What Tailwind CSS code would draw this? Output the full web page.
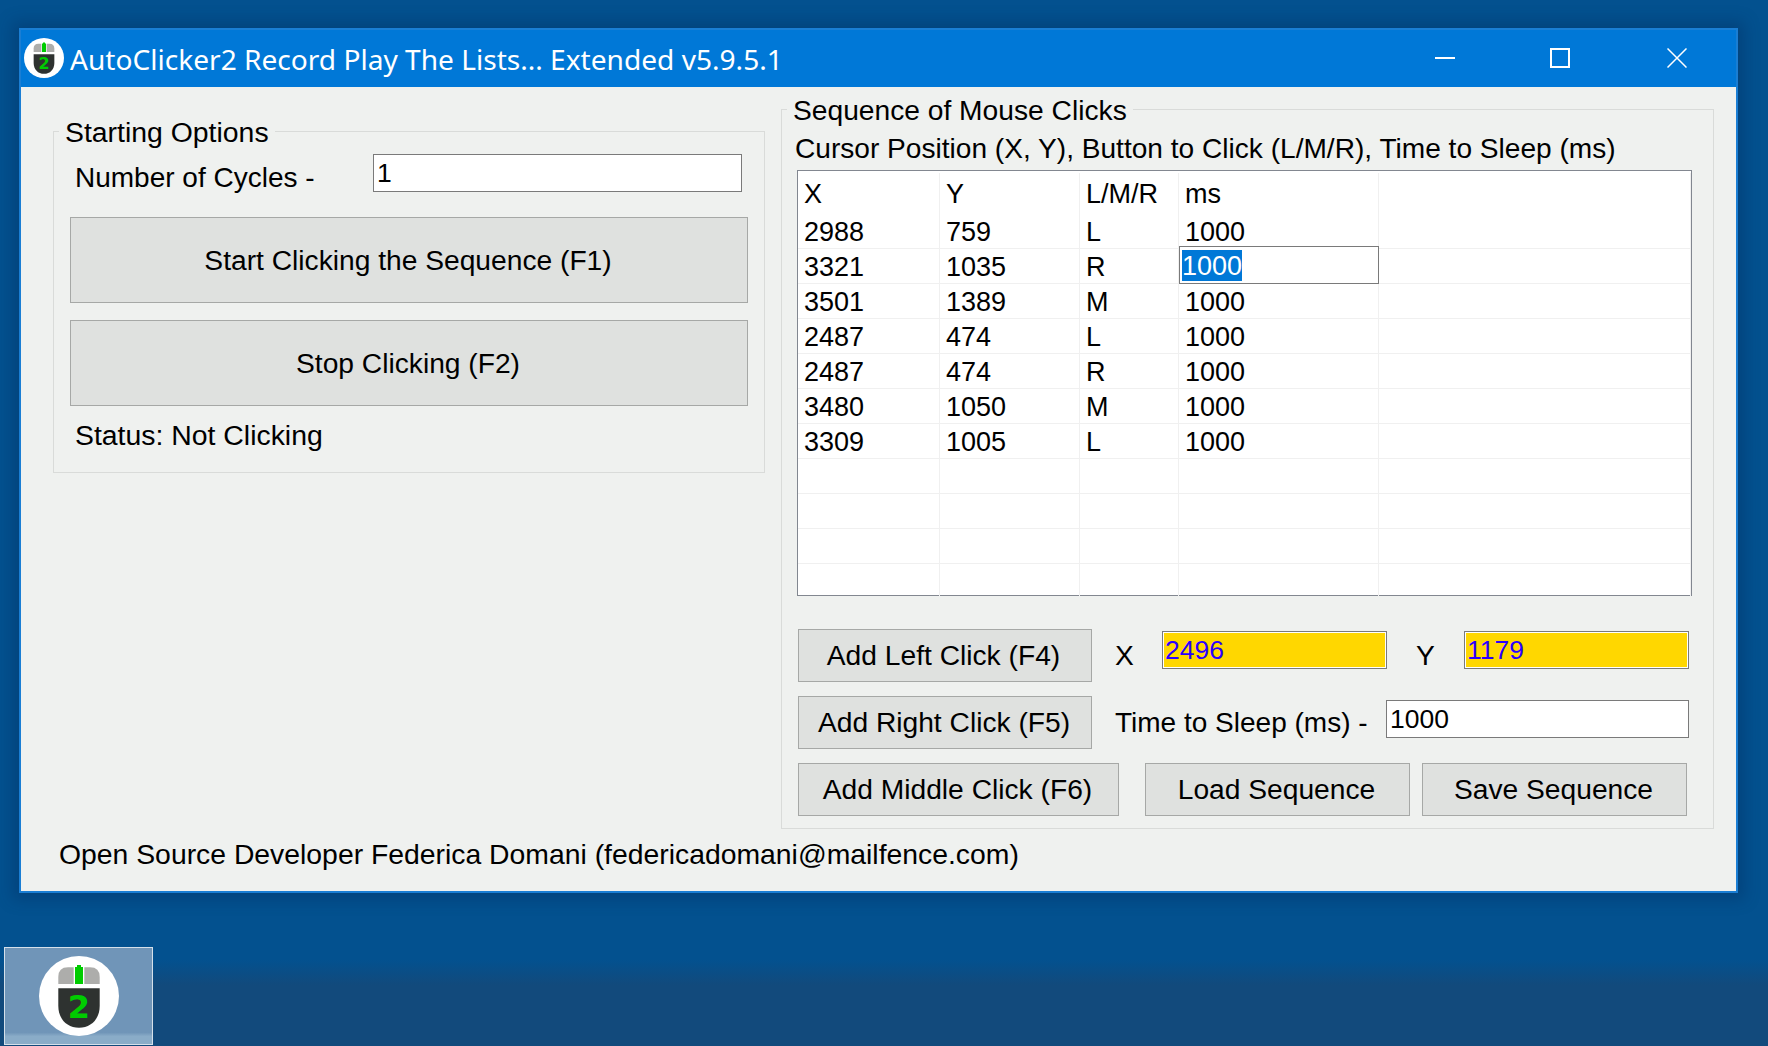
<!DOCTYPE html>
<html lang="en">

<head>
    <meta charset="UTF-8">
    <title>AutoClicker2</title>
    <script src="https://cdn.jsdelivr.net/npm/@tailwindcss/browser@4"></script>
</head>

<body class="relative w-[1768px] h-[1046px] overflow-hidden bg-[linear-gradient(#03518f_0,#03518f_960px,#124a7c_985px)] font-['Liberation_Sans',Arial,sans-serif] text-[28.2px] leading-none text-black">

    <!-- Main window -->
    <div class="absolute left-[19px] top-[28px] w-[1719px] h-[865px] border-2 border-[#1a7ed4] bg-[#eff1ef] shadow-[0_0_14px_6px_rgba(0,40,90,.35)] flex flex-col">

        <!-- Title bar -->
        <div class="h-[57px] shrink-0 bg-[#0078d7] text-white flex items-center pl-[3px]">
            <svg class="w-[40px] h-[40px] shrink-0 mb-[2px]" viewBox="0 0 80 80">
                <circle cx="40" cy="40" r="40" fill="#fff" />
                <path d="M19.3 28V21Q19.3 11.3 29 11.3H34.7V28Z" fill="#adadab" />
                <path d="M60.7 28V21Q60.7 11.3 51 11.3H45.3V28Z" fill="#adadab" />
                <path d="M36 28V11H38V9H42V11H44V28Z" fill="#00cc00" />
                <path d="M19.3 32.3H60.7V50C60.7 63 52 71.7 40 71.7C28 71.7 19.3 63 19.3 50Z" fill="#2e3230" />
                <text x="40" y="61.5" text-anchor="middle" font-family="DejaVu Sans" font-weight="700" font-size="32" fill="#00cc00">2</text>
            </svg>
            <span class="ml-[6px] pt-[2px] font-['Noto_Sans',sans-serif] text-[28.1px]">AutoClicker2 Record Play The Lists... Extended v5.9.5.1</span>
            <div class="ml-auto flex items-center pr-[49px] mb-[2px]">
                <svg class="w-[20px] h-[20px]" viewBox="0 0 20 20"><path d="M0 10H20" stroke="#fff" stroke-width="2" /></svg>
                <svg class="w-[20px] h-[20px] ml-[95px]" viewBox="0 0 20 20"><path d="M1 1H19V19H1Z" fill="none" stroke="#fff" stroke-width="2" /></svg>
                <svg class="w-[20px] h-[20px] ml-[97px]" viewBox="0 0 20 20"><path d="M0.5 0.5L19.5 19.5M19.5 0.5L0.5 19.5" stroke="#fff" stroke-width="1.5" /></svg>
            </div>
        </div>

        <!-- Body -->
        <div class="relative flex-1 flex items-start">

            <!-- Starting Options -->
            <div class="relative ml-[32px] mt-[44px] w-[712px] h-[342px] shrink-0 border border-[#d9dbd9] px-[16px]">
                <div class="absolute left-[5px] top-[-15px] bg-[#eff1ef] px-[6px] h-[30px] flex items-center text-[28.4px]">Starting Options</div>
                <div class="flex items-center h-[38px] mt-[22px]">
                    <span class="ml-[5px] w-[298px] pt-[9px] text-[28px]">Number of Cycles -</span>
                    <div class="w-[369px] h-[38px] border border-[#7a7a7a] bg-white text-[26.5px] pl-[3px] flex items-center">1</div>
                </div>
                <button class="block w-[678px] h-[86px] mt-[25px] pr-[2px] border border-[#a6a8a6] bg-[#dfe1df]">Start Clicking the Sequence (F1)</button>
                <button class="block w-[678px] h-[86px] mt-[17px] pr-[2px] border border-[#a6a8a6] bg-[#dfe1df]">Stop Clicking (F2)</button>
                <div class="ml-[5px] mt-[15px] text-[28.4px]">Status: Not Clicking</div>
            </div>

            <!-- Sequence of Mouse Clicks -->
            <div class="relative ml-[16px] mt-[22px] w-[933px] h-[720px] shrink-0 border border-[#d9dbd9] pl-[13px]">
                <div class="absolute left-[5px] top-[-15px] bg-[#eff1ef] px-[6px] h-[30px] flex items-center whitespace-nowrap">Sequence of Mouse Clicks</div>
                <div class="mt-[25px] h-[28px] flex items-center whitespace-nowrap text-[28.1px]">Cursor Position (X, Y), Button to Click (L/M/R), Time to Sleep (ms)</div>

                <!-- List of clicks -->
                <div class="relative mt-[7px] ml-[2px] w-[895px] h-[426px] border border-[#828790] bg-white text-[27px]">
                    <div class="grid grid-cols-[142px_140px_99px_200px_1fr] h-[43px] pt-[2px] *:pl-[6px] *:pt-[2px] *:flex *:items-center *:border-r *:border-[#f0f0f0]">
                        <div class="pl-[7px]">X</div><div>Y</div><div>L/M/R</div><div>ms</div><div class="border-r-0"></div>
                    </div>
                    <div class="grid grid-cols-[142px_140px_99px_200px_1fr] h-[35px] border-b border-[#f0f0f0] *:pl-[6px] *:pt-[2px] *:flex *:items-center *:border-r *:border-[#f0f0f0]">
                        <div>2988</div><div>759</div><div>L</div><div>1000</div><div></div>
                    </div>
                    <div class="grid grid-cols-[142px_140px_99px_200px_1fr] h-[35px] border-b border-[#f0f0f0] *:pl-[6px] *:pt-[2px] *:flex *:items-center *:border-r *:border-[#f0f0f0]">
                        <div>3321</div><div>1035</div><div>R</div>
                        <div class="relative"><div class="absolute left-0 top-[-3px] w-[200px] h-[38px] border border-[#7a7a7a] bg-white flex items-center pl-[2px]"><div class="bg-[#0078d7] text-white h-[31px] w-[60px] pt-[2px] flex items-center">1000</div></div></div><div></div>
                    </div>
                    <div class="grid grid-cols-[142px_140px_99px_200px_1fr] h-[35px] border-b border-[#f0f0f0] *:pl-[6px] *:pt-[2px] *:flex *:items-center *:border-r *:border-[#f0f0f0]">
                        <div>3501</div><div>1389</div><div>M</div><div>1000</div><div></div>
                    </div>
                    <div class="grid grid-cols-[142px_140px_99px_200px_1fr] h-[35px] border-b border-[#f0f0f0] *:pl-[6px] *:pt-[2px] *:flex *:items-center *:border-r *:border-[#f0f0f0]">
                        <div>2487</div><div>474</div><div>L</div><div>1000</div><div></div>
                    </div>
                    <div class="grid grid-cols-[142px_140px_99px_200px_1fr] h-[35px] border-b border-[#f0f0f0] *:pl-[6px] *:pt-[2px] *:flex *:items-center *:border-r *:border-[#f0f0f0]">
                        <div>2487</div><div>474</div><div>R</div><div>1000</div><div></div>
                    </div>
                    <div class="grid grid-cols-[142px_140px_99px_200px_1fr] h-[35px] border-b border-[#f0f0f0] *:pl-[6px] *:pt-[2px] *:flex *:items-center *:border-r *:border-[#f0f0f0]">
                        <div>3480</div><div>1050</div><div>M</div><div>1000</div><div></div>
                    </div>
                    <div class="grid grid-cols-[142px_140px_99px_200px_1fr] h-[35px] border-b border-[#f0f0f0] *:pl-[6px] *:pt-[2px] *:flex *:items-center *:border-r *:border-[#f0f0f0]">
                        <div>3309</div><div>1005</div><div>L</div><div>1000</div><div></div>
                    </div>
                    <div class="grid grid-cols-[142px_140px_99px_200px_1fr] h-[35px] border-b border-[#f0f0f0] *:border-r *:border-[#f0f0f0]"><div></div><div></div><div></div><div></div><div></div></div>
                    <div class="grid grid-cols-[142px_140px_99px_200px_1fr] h-[35px] border-b border-[#f0f0f0] *:border-r *:border-[#f0f0f0]"><div></div><div></div><div></div><div></div><div></div></div>
                    <div class="grid grid-cols-[142px_140px_99px_200px_1fr] h-[35px] border-b border-[#f0f0f0] *:border-r *:border-[#f0f0f0]"><div></div><div></div><div></div><div></div><div></div></div>
                    <div class="grid grid-cols-[142px_140px_99px_200px_1fr] h-[32px] *:border-r *:border-[#f0f0f0]"><div></div><div></div><div></div><div></div><div></div></div>
                </div>

                <!-- Controls -->
                <div class="flex items-center mt-[32px] ml-[3px] h-[54px]">
                    <button class="w-[294px] h-[53px] pt-[1px] pr-[3px] border border-[#a6a8a6] bg-[#dfe1df]">Add Left Click (F4)</button>
                    <span class="ml-[23px] w-[47px] pt-[1px]">X</span>
                    <div class="w-[225px] h-[38px] mb-[10px] border border-[#7a7a7a] outline outline-1 -outline-offset-2 outline-white bg-[#ffd700] text-[26.5px] text-[#2a00ff] pl-[2px] flex items-center">2496</div>
                    <span class="ml-[29px] w-[48px] pt-[1px]">Y</span>
                    <div class="w-[225px] h-[38px] mb-[10px] border border-[#7a7a7a] outline outline-1 -outline-offset-2 outline-white bg-[#ffd700] text-[26.5px] text-[#2a00ff] pl-[2px] flex items-center">1179</div>
                </div>
                <div class="flex items-center mt-[13px] ml-[3px] h-[54px]">
                    <button class="w-[294px] h-[53px] pt-[1px] pr-[2px] border border-[#a6a8a6] bg-[#dfe1df]">Add Right Click (F5)</button>
                    <span class="ml-[23px] w-[271px] pt-[2px] whitespace-nowrap text-[28px]">Time to Sleep (ms) -</span>
                    <div class="w-[303px] h-[38px] mb-[6px] border border-[#7a7a7a] bg-white text-[26.5px] pl-[3px] flex items-center">1000</div>
                </div>
                <div class="flex items-center mt-[14px] ml-[3px] h-[53px]">
                    <button class="w-[321px] h-[53px] pr-[2px] border border-[#a6a8a6] bg-[#dfe1df]">Add Middle Click (F6)</button>
                    <button class="ml-[26px] w-[265px] h-[53px] pr-[2px] border border-[#a6a8a6] bg-[#dfe1df]">Load Sequence</button>
                    <button class="ml-[12px] w-[265px] h-[53px] pr-[2px] border border-[#a6a8a6] bg-[#dfe1df]">Save Sequence</button>
                </div>
            </div>

            <div class="absolute left-[38px] top-[753px] text-[28.35px]">Open Source Developer Federica Domani (federicadomani@mailfence.com)</div>
        </div>
    </div>

    <!-- Minimised tray thumbnail -->
    <div class="absolute left-[4px] top-[947px] w-[149px] h-[98px] border border-[#d5e0ea] bg-[linear-gradient(#7095b8_0,#7095b8_88%,#8aacc8_92%)] flex items-center justify-center">
        <svg class="w-[80px] h-[80px]" viewBox="0 0 80 80">
            <circle cx="40" cy="40" r="40" fill="#fff" />
            <path d="M19.3 28V21Q19.3 11.3 29 11.3H34.7V28Z" fill="#adadab" />
            <path d="M60.7 28V21Q60.7 11.3 51 11.3H45.3V28Z" fill="#adadab" />
            <path d="M36 28V11H38V9H42V11H44V28Z" fill="#00cc00" />
            <path d="M19.3 32.3H60.7V50C60.7 63 52 71.7 40 71.7C28 71.7 19.3 63 19.3 50Z" fill="#2e3230" />
            <text x="40" y="61.5" text-anchor="middle" font-family="DejaVu Sans" font-weight="700" font-size="32" fill="#00cc00">2</text>
        </svg>
    </div>
</body>

</html>
